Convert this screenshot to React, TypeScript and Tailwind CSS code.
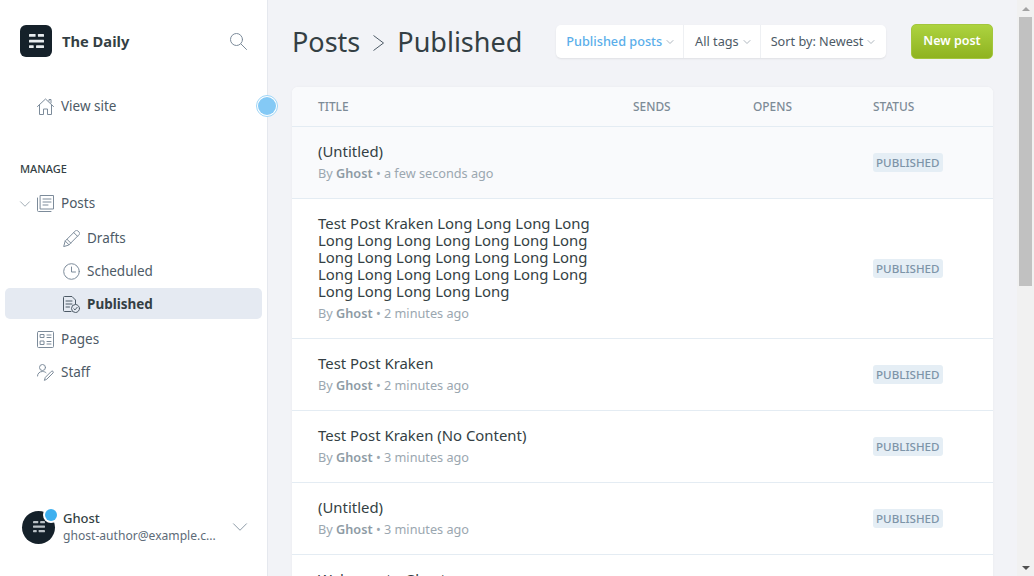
import React from 'react';
import { ChevronDown } from 'lucide-react';

const posts = [
  { title: '(Untitled)', time: 'a few seconds ago', active: true },
  {
    title:
      'Test Post Kraken Long Long Long Long Long Long Long Long Long Long Long Long Long Long Long Long Long Long Long Long Long Long Long Long Long Long Long Long Long Long',
    time: '2 minutes ago',
  },
  { title: 'Test Post Kraken', time: '2 minutes ago' },
  { title: 'Test Post Kraken (No Content)', time: '3 minutes ago' },
  { title: '(Untitled)', time: '3 minutes ago' },
];

const LogoMark = ({ className }: { className: string }) => (
  <svg viewBox="0 0 16 16" className={className} fill="currentColor">
    <rect x="0" y="0" width="7" height="3" rx="0.6" />
    <rect x="9.5" y="0" width="6.5" height="3" rx="0.6" />
    <rect x="0" y="6" width="16" height="3" rx="0.6" />
    <rect x="0" y="12" width="5" height="3" rx="0.6" />
    <rect x="7.5" y="12" width="8.5" height="3" rx="0.6" />
  </svg>
);

const iconProps = {
  fill: 'none',
  stroke: '#7c8b9a',
  strokeWidth: 1,
  strokeLinecap: 'round' as const,
  strokeLinejoin: 'round' as const,
};

const SearchIcon = () => (
  <svg viewBox="0 0 17 17" className="ml-auto w-[17px] h-[17px]" {...iconProps}>
    <circle cx="6.5" cy="6.5" r="6" />
    <path d="m11 11 5.5 5.5" />
  </svg>
);

const HomeIcon = () => (
  <svg viewBox="0 0 17 17" className="w-[17px] h-[17px]" {...iconProps}>
    <path d="M0.5 8.5 8.5 1l8 7.5" />
    <path d="M2.5 7v9.5h4V11h4v5.5h4V7" />
    <path d="M12 3V1.5h2v3.4" />
  </svg>
);

const PostsIcon = () => (
  <svg viewBox="0 0 17 17" className="w-[17px] h-[17px]" {...iconProps}>
    <path d="M3.5 0.5h13v13.5h-13z" />
    <path d="M0.5 3v12.5a1 1 0 0 0 1 1H14" />
    <path d="M6 4h8M6 7h8M6 10h5" />
  </svg>
);

const PencilIcon = () => (
  <svg viewBox="0 0 17 17" className="w-[17px] h-[17px]" {...iconProps}>
    <path d="M0.8 16.2 2.2 11 12.5 0.8a1.6 1.6 0 0 1 2.2 0l1.5 1.5a1.6 1.6 0 0 1 0 2.2L6 14.8z" />
    <path d="M2.2 11 6 14.8M4 9.3l3.7 3.7M10.8 2.6l3.6 3.6" />
  </svg>
);

const ClockIcon = () => (
  <svg viewBox="0 0 17 17" className="w-[17px] h-[17px]" {...iconProps}>
    <circle cx="8.5" cy="8.5" r="7.8" />
    <path d="M8.5 4v5h4" />
  </svg>
);

const PublishedIcon = () => (
  <svg viewBox="0 0 17 17" className="w-[17px] h-[17px]" fill="none" stroke="#4d5a66" strokeWidth="1" strokeLinecap="round" strokeLinejoin="round">
    <path d="M8 15.5H1.5a1 1 0 0 1-1-1v-13a1 1 0 0 1 1-1H9L12.5 4v4" />
    <path d="M3 5h6M3 8h6M3 11h3.5" />
    <circle cx="12.5" cy="12.5" r="4" />
    <path d="m10.8 12.7 1.2 1.2 2.2-2.6" />
  </svg>
);

const PagesIcon = () => (
  <svg viewBox="0 0 17 17" className="w-[17px] h-[17px]" {...iconProps}>
    <rect x="0.5" y="0.5" width="16" height="16" rx="1" />
    <path d="M3.5 3.5h3.5v3H3.5zM3.5 10h3.5v3.5H3.5zM10 4h4M10 6.5h4M10 10.5h4M10 13h4" />
  </svg>
);

const StaffIcon = () => (
  <svg viewBox="0 0 17 17" className="w-[17px] h-[17px]" {...iconProps}>
    <circle cx="5.5" cy="3.5" r="3" />
    <path d="M0.5 12c0-2.5 2-4.5 5-4.5 1.5 0 2.6.4 3.5 1.2" />
    <path d="m7.5 16 .8-2.6 6-6a1.1 1.1 0 0 1 1.7 1.6l-6 6z" />
  </svg>
);

const NavItem = ({
  icon,
  label,
  sub,
  active,
  className,
}: {
  icon: React.ReactNode;
  label: string;
  sub?: boolean;
  active?: boolean;
  className: string;
}) => (
  <div
    className={`flex items-center mx-[5px] rounded-[5px] ${sub ? 'pl-[58px]' : 'pl-[32px]'} ${className} ${
      active ? 'bg-[#e5eaf2] font-bold text-[#343f44]' : 'text-[#4d5a66]'
    }`}
  >
    <span className="w-[24px] shrink-0">{icon}</span>
    <span className="text-[13.5px]">{label}</span>
  </div>
);

const FilterButton = ({ label, active, className }: { label: string; active?: boolean; className: string }) => (
  <div className={`flex items-center h-[33px] ${className}`}>
    <span className={`text-[12.7px] ${active ? 'font-medium text-[#5aaeea]' : 'text-[#4d5a66]'}`}>{label}</span>
    <ChevronDown className="ml-[2px] w-[12px] h-[12px] text-[#9aa5ae]" strokeWidth={1.6} />
  </div>
);

const PostRow = ({ title, time, active }: { title: string; time: string; active?: boolean }) => (
  <div className={`flex items-center border-t border-[#e4ecf3] ${active ? 'bg-[#f9fafc]' : 'bg-white'}`}>
    <div className="w-[581px] pl-[26px] py-[16px]">
      <div className="w-[275px] text-[14.9px] leading-[17px] text-[#343f44]">{title}</div>
      <div className="mt-[5px] text-[12.7px] leading-[17px] text-[#9ba7b0]">
        By <span className="font-semibold text-[#8e9ba5]">Ghost</span> • {time}
      </div>
    </div>
    <span className="px-[3px] h-[19px] leading-[19px] rounded-[3px] bg-[#e5eef5] text-[11.6px] font-medium text-[#7d94a8]">
      PUBLISHED
    </span>
  </div>
);

export default function App() {
  return (
    <div className="flex h-[576px] w-[1034px] overflow-hidden bg-[#f2f3f7] font-['Noto_Sans','Open_Sans',sans-serif]">
      <aside className="flex flex-col w-[268px] shrink-0 bg-white border-r border-[#e5e8ee] relative">
        <div className="flex items-center pl-[20px] pr-[20px] pt-[25px]">
          <div className="flex items-center justify-center w-[32px] h-[32px] rounded-[6px] bg-[#15212a] text-[#e8ecef]">
            <LogoMark className="w-[15px] h-[15px]" />
          </div>
          <span className="ml-[10px] text-[14.7px] font-bold text-[#343f44]">The Daily</span>
          <SearchIcon />
        </div>

        <NavItem icon={<HomeIcon />} label="View site" className="mt-[33px] h-[33px]" />

        <div className="mt-[38px] pl-[20px] text-[11px] font-medium leading-[15px] text-[#343f44]">MANAGE</div>

        <div className="relative">
          <ChevronDown className="absolute left-[16px] top-[19px] w-[18px] h-[18px] text-[#9aa5ae]" strokeWidth={1.2} />
          <NavItem icon={<PostsIcon />} label="Posts" className="mt-[11px] h-[33px]" />
        </div>
        <NavItem icon={<PencilIcon />} label="Drafts" sub className="mt-[2px] h-[33px]" />
        <NavItem icon={<ClockIcon />} label="Scheduled" sub className="h-[33px]" />
        <NavItem icon={<PublishedIcon />} label="Published" sub active className="h-[31px] pt-[1px]" />
        <NavItem icon={<PagesIcon />} label="Pages" className="mt-[4px] h-[33px]" />
        <NavItem icon={<StaffIcon />} label="Staff" className="h-[33px]" />

        <div className="mt-auto mb-[31px] flex items-center pl-[22px] pr-[20px]">
          <div className="relative flex items-center justify-center w-[33px] h-[33px] rounded-full bg-[#15212a] text-[#b9c0c5]">
            <LogoMark className="w-[12px] h-[12px]" />
            <span className="absolute -top-[2px] -right-[2px] w-[12px] h-[12px] rounded-full bg-[#3eb0ef] ring-2 ring-white" />
          </div>
          <div className="ml-[8px] leading-[18px]">
            <div className="text-[13px] font-medium text-[#343f44]">Ghost</div>
            <div className="text-[12.1px] text-[#5d6b78]">ghost-author@example.c...</div>
          </div>
          <ChevronDown className="ml-auto -mr-[6px] w-[26px] h-[26px] text-[#7c8b9a]" strokeWidth={0.8} />
        </div>

        {/* onboarding pulse */}
        <span className="absolute left-[256px] top-[95px] flex items-center justify-center w-[22px] h-[22px] rounded-full border border-[#9fd6f7] bg-white">
          <span className="w-[18px] h-[18px] rounded-full bg-[#84c9f5]" />
        </span>
      </aside>

      <main className="flex-1 min-w-0 pl-[24px] pr-[24px]">
        <header className="flex items-center h-[87px] pb-[4px]">
          <h1 className="flex items-center mt-[2px] text-[27px] text-[#343f44]">
            Posts
            <svg viewBox="0 0 11 16" className="mx-[13px] w-[11px] h-[16px]" fill="none" stroke="#4d5a66" strokeWidth="1">
              <path d="M0.5 0.5 10.5 8 0.5 15.5" />
            </svg>
            Published
          </h1>
          <div className="ml-[34px] flex rounded-[5px] bg-white shadow-[0_1px_2px_rgba(0,0,0,0.08)]">
            <FilterButton label="Published posts" active className="pl-[10px] pr-[7px]" />
            <FilterButton label="All tags" className="pl-[11px] pr-[7px] border-l border-[#eef0f3]" />
            <FilterButton label="Sort by: Newest" className="pl-[10px] pr-[9px] border-l border-[#eef0f3]" />
          </div>
          <button className="ml-auto h-[35px] w-[82px] rounded-[5px] border border-[#a3c63c] bg-gradient-to-b from-[#add33f] to-[#8fb31f] text-[12.5px] font-semibold text-white">
            New post
          </button>
        </header>

        <section className="rounded-t-[6px] bg-white overflow-hidden shadow-[0_0_3px_rgba(0,0,0,0.04)]">
          <div className="flex items-center h-[39px] bg-[#f9fafc] text-[11.9px] font-medium text-[#7d8b97]">
            <span className="pl-[26px] w-[341px]">TITLE</span>
            <span className="w-[120px]">SENDS</span>
            <span className="w-[120px]">OPENS</span>
            <span>STATUS</span>
          </div>
          {posts.map((post, i) => (
            <PostRow key={i} {...post} />
          ))}
          <div className="border-t border-[#e4ecf3] pl-[26px] pt-[16px] text-[14.9px] leading-[17px] text-[#343f44]">
            Welcome to Ghost
          </div>
        </section>
      </main>

      <div className="flex flex-col w-[17px] shrink-0 bg-[#f1f1f1]">
        <div className="flex items-center justify-center h-[17px]">
          <span className="border-x-[4px] border-x-transparent border-b-[4px] border-b-[#a3a3a3]" />
        </div>
        <div className="mx-[2px] h-[269px] bg-[#c1c1c1]" />
        <div className="flex items-center justify-center h-[17px] mt-auto">
          <span className="border-x-[4px] border-x-transparent border-t-[4px] border-t-[#505050]" />
        </div>
      </div>
    </div>
  );
}
